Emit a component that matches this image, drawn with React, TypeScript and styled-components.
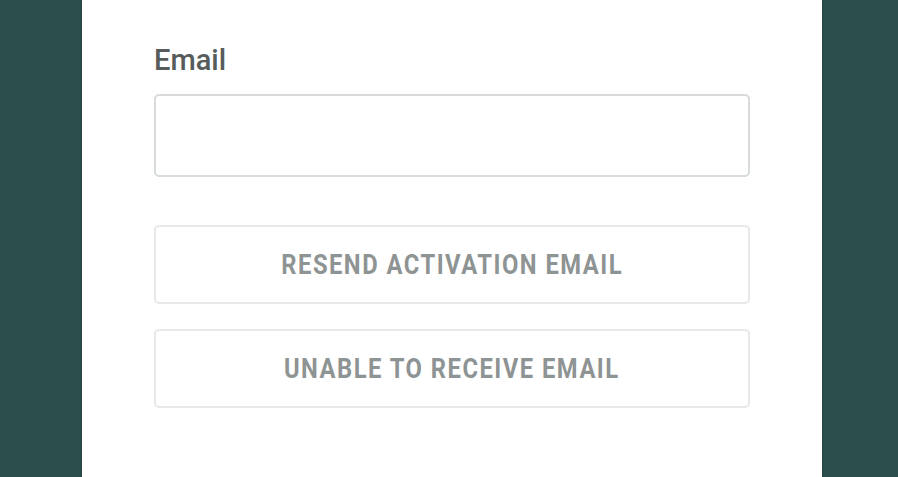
import styled, { createGlobalStyle } from "styled-components";

const GlobalStyle = createGlobalStyle`
    html, body {
        margin: 0;
        padding: 0;
        background: #2b4f4c;
        height: 100%;
        overflow: hidden;
    }
    #root {
        height: 100%;
    }
`

const Page = styled.div`
    display: flex;
    justify-content: center;
    height: 100%;
    padding-left: 6px;
`

const Card = styled.div`
    width: 740px;
    background: #ffffff;
    box-shadow: 0 0 3px rgba(0, 0, 0, 0.25);
    padding: 43px 72px 0;
    box-sizing: border-box;
    display: flex;
    flex-direction: column;
    font-family: Roboto, "Noto Sans", sans-serif;
`

const Label = styled.label`
    font-size: 29px;
    font-weight: 500;
    color: #565c5b;
    line-height: 34px;
    margin-bottom: 17px;
`

const Input = styled.input`
    height: 83px;
    box-sizing: border-box;
    border: 2px solid #d7dbda;
    border-radius: 5px;
    outline: none;
    font-size: 20px;
    padding: 0 16px;
    margin-bottom: 48px;
`

const Actions = styled.div`
    display: flex;
    flex-direction: column;
    gap: 25px;
`

const Button = styled.button`
    height: 79px;
    box-sizing: border-box;
    background: #ffffff;
    border: 2px solid #e7e8e8;
    border-radius: 5px;
    display: flex;
    justify-content: center;
    align-items: center;
    cursor: pointer;
    padding: 0;
`

const ButtonText = styled.span`
    display: inline-block;
    font-family: Roboto, "Noto Sans", sans-serif;
    font-weight: 700;
    font-size: 27px;
    line-height: 32px;
    letter-spacing: 1.7px;
    color: #8e9393;
    transform: scaleX(0.88);
    white-space: nowrap;
`

export default function App() {
    return (
        <>
            <GlobalStyle />
            <Page>
                <Card>
                    <Label htmlFor="email">Email</Label>
                    <Input id="email" type="email" />
                    <Actions>
                        <Button>
                            <ButtonText>RESEND ACTIVATION EMAIL</ButtonText>
                        </Button>
                        <Button>
                            <ButtonText>UNABLE TO RECEIVE EMAIL</ButtonText>
                        </Button>
                    </Actions>
                </Card>
            </Page>
        </>
    )
}
